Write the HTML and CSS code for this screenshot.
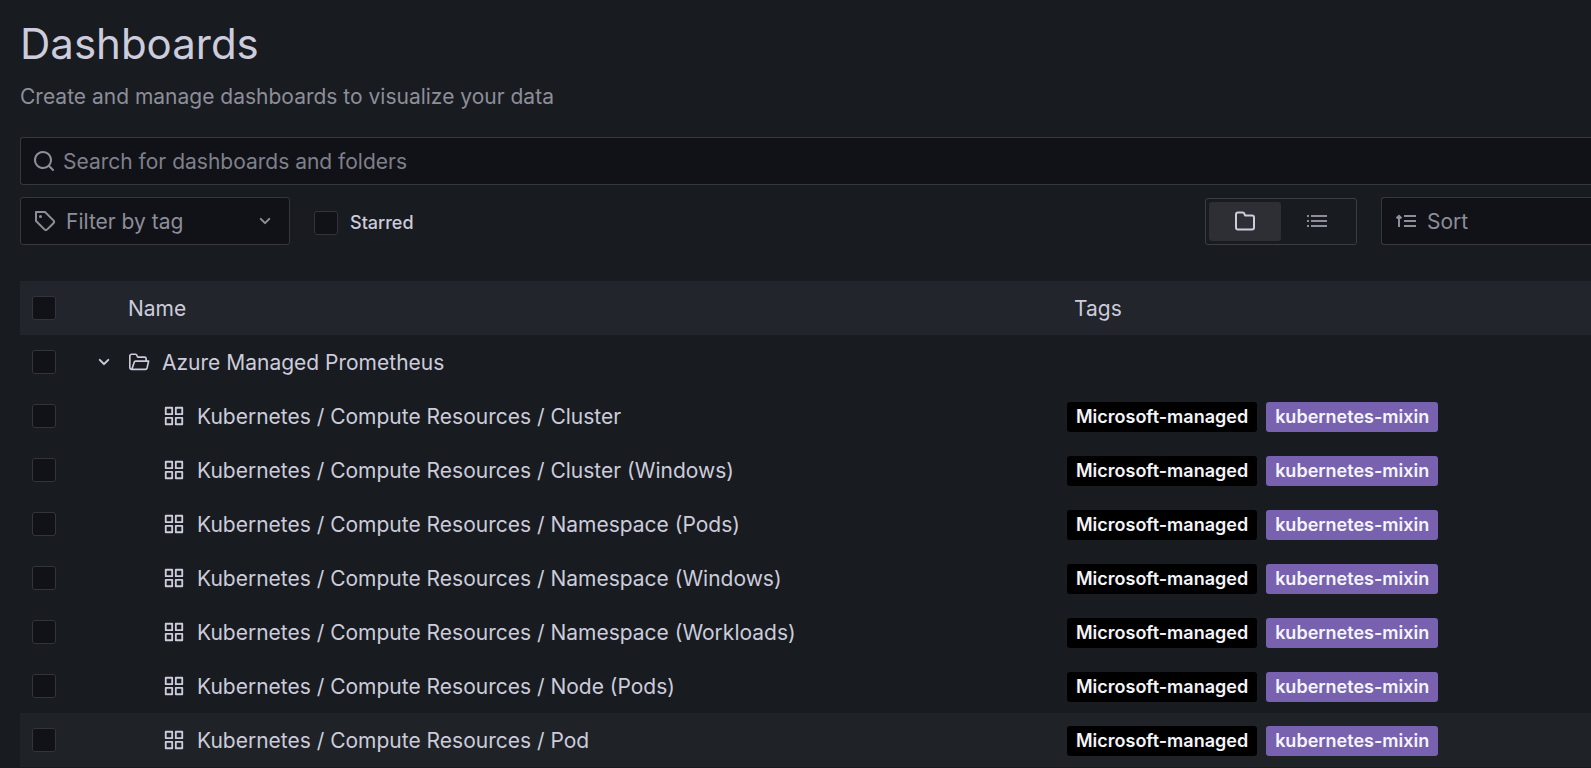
FILE: index.html
```html
<!DOCTYPE html>
<html lang="en">
<head>
<meta charset="utf-8">
<title>Dashboards</title>
<link rel="stylesheet" href="styles.css">
</head>
<body>
<svg class="sprite" aria-hidden="true">
  <symbol id="i-search" viewBox="0 0 24 24"><path d="M21.71,20.29,18,16.61A9,9,0,1,0,16.61,18l3.68,3.68a1,1,0,0,0,1.42,0A1,1,0,0,0,21.71,20.29ZM11,18a7,7,0,1,1,7-7A7,7,0,0,1,11,18Z"/></symbol>
  <symbol id="i-tag" viewBox="0 0 24 24"><path d="M7.5,6A1.5,1.5,0,1,0,9,7.5,1.5,1.5,0,0,0,7.5,6Zm13.62,4.71L12.71,2.29A1,1,0,0,0,12,2H3A1,1,0,0,0,2,3v9a1,1,0,0,0,.29.71l8.42,8.41a3,3,0,0,0,4.24,0L21.12,15a3,3,0,0,0,0-4.24Zm-1.41,2.82h0l-6.18,6.17a1,1,0,0,1-1.41,0L4,11.59V4h7.59l8.12,8.12a1,1,0,0,1,.29.71A1,1,0,0,1,19.71,13.53Z"/></symbol>
  <symbol id="i-down" viewBox="0 0 24 24"><path d="M17,9.17a1,1,0,0,0-1.41,0L12,12.71,8.46,9.17a1,1,0,0,0-1.41,0,1,1,0,0,0,0,1.42l4.24,4.24a1,1,0,0,0,1.42,0L17,10.59A1,1,0,0,0,17,9.17Z"/></symbol>
  <symbol id="i-folder" viewBox="0 0 24 24"><path d="M19,5.5H12.72l-.32-1a3,3,0,0,0-2.84-2H5a3,3,0,0,0-3,3v13a3,3,0,0,0,3,3H19a3,3,0,0,0,3-3V8.5A3,3,0,0,0,19,5.5Zm1,13a1,1,0,0,1-1,1H5a1,1,0,0,1-1-1V5.5a1,1,0,0,1,1-1H9.56a1,1,0,0,1,.95.68l.54,1.64A1,1,0,0,0,12,7.5h7a1,1,0,0,1,1,1Z"/></symbol>
  <symbol id="i-folder-open" viewBox="0 0 24 24"><path d="M5.3 20H4a2 2 0 0 1-2-2V5.5a2 2 0 0 1 2-2h4.2a1.6 1.6 0 0 1 1.5 1.1l.5 1.4a1 1 0 0 0 1 .7H18a1.800 1.800 0 0 1 1.800 1.800V11M4.200 20l2.700-8a1.500 1.500 0 0 1 1.400-1H22.500L20.800 18.500A2 2 0 0 1 18.800 20H4.200Z" fill="none" stroke="currentColor" stroke-width="1.800" stroke-linejoin="round"/></symbol>
  <symbol id="i-list" viewBox="0 0 24 24"><path d="M2 7h2M2 12h2M2 17h2M6 7h16M6 12h16M6 17h16" fill="none" stroke="currentColor" stroke-width="2"/></symbol>
  <symbol id="i-sort" viewBox="0 0 24 24"><path d="M5 18V7M2.500 9.200 5 6.800l2.500 2.400M10 7h12M10 12h12M10 17h12" fill="none" stroke="currentColor" stroke-width="2"/></symbol>
  <symbol id="i-apps" viewBox="0 0 24 24"><path d="M10,13H3a1,1,0,0,0-1,1v7a1,1,0,0,0,1,1h7a1,1,0,0,0,1-1V14A1,1,0,0,0,10,13ZM9,20H4V15H9ZM21,2H14a1,1,0,0,0-1,1v7a1,1,0,0,0,1,1h7a1,1,0,0,0,1-1V3A1,1,0,0,0,21,2ZM20,9H15V4h5Zm1,4H14a1,1,0,0,0-1,1v7a1,1,0,0,0,1,1h7a1,1,0,0,0,1-1V14A1,1,0,0,0,21,13Zm-1,7H15V15h5ZM10,2H3A1,1,0,0,0,2,3v7a1,1,0,0,0,1,1h7a1,1,0,0,0,1-1V3A1,1,0,0,0,10,2ZM9,9H4V4H9Z"/></symbol>
</svg>
<main class="page">
  <h1 class="title">Dashboards</h1>
  <p class="subtitle">Create and manage dashboards to visualize your data</p>

  <div class="field search">
    <svg class="icon"><use href="#i-search"/></svg>
    <input class="control" type="text" placeholder="Search for dashboards and folders" aria-label="Search for dashboards and folders">
  </div>

  <div class="toolbar">
    <div class="field filter">
      <svg class="icon"><use href="#i-tag"/></svg>
      <select class="control" aria-label="Filter by tag"><option>Filter by tag</option></select>
      <svg class="icon"><use href="#i-down"/></svg>
    </div>
    <label class="starred"><input class="check" type="checkbox">Starred</label>
    <div class="toggle" role="group" aria-label="View">
      <button class="view active" type="button" aria-label="Folders" aria-pressed="true"><svg class="icon"><use href="#i-folder"/></svg></button>
      <button class="view" type="button" aria-label="List" aria-pressed="false"><svg class="icon"><use href="#i-list"/></svg></button>
    </div>
    <div class="field sort">
      <svg class="icon"><use href="#i-sort"/></svg>
      <select class="control" aria-label="Sort"><option>Sort</option></select>
    </div>
  </div>

  <table class="table">
    <colgroup><col class="col-check"><col><col class="col-tags"></colgroup>
    <thead>
      <tr><th class="pick"><input class="check" type="checkbox" aria-label="Select all"></th><th class="head-name">Name</th><th class="head-tags">Tags</th></tr>
    </thead>
    <tbody>
      <tr><td class="pick"><input class="check" type="checkbox" aria-label="Select Azure Managed Prometheus"></td><td><div class="name"><button class="expand" type="button" aria-label="Collapse folder"><svg class="icon"><use href="#i-down"/></svg></button><svg class="icon small"><use href="#i-folder-open"/></svg><a class="link" href="#">Azure Managed Prometheus</a></div></td><td></td></tr>
      <tr><td class="pick"><input class="check" type="checkbox" aria-label="Select Cluster"></td><td><div class="name child"><svg class="icon small"><use href="#i-apps"/></svg><a class="link" href="#">Kubernetes / Compute Resources / Cluster</a></div></td><td><div class="tags"><span class="tag">Microsoft-managed</span><span class="tag purple">kubernetes-mixin</span></div></td></tr>
      <tr><td class="pick"><input class="check" type="checkbox" aria-label="Select Cluster (Windows)"></td><td><div class="name child"><svg class="icon small"><use href="#i-apps"/></svg><a class="link" href="#">Kubernetes / Compute Resources / Cluster (Windows)</a></div></td><td><div class="tags"><span class="tag">Microsoft-managed</span><span class="tag purple">kubernetes-mixin</span></div></td></tr>
      <tr><td class="pick"><input class="check" type="checkbox" aria-label="Select Namespace (Pods)"></td><td><div class="name child"><svg class="icon small"><use href="#i-apps"/></svg><a class="link" href="#">Kubernetes / Compute Resources / Namespace (Pods)</a></div></td><td><div class="tags"><span class="tag">Microsoft-managed</span><span class="tag purple">kubernetes-mixin</span></div></td></tr>
      <tr><td class="pick"><input class="check" type="checkbox" aria-label="Select Namespace (Windows)"></td><td><div class="name child"><svg class="icon small"><use href="#i-apps"/></svg><a class="link" href="#">Kubernetes / Compute Resources / Namespace (Windows)</a></div></td><td><div class="tags"><span class="tag">Microsoft-managed</span><span class="tag purple">kubernetes-mixin</span></div></td></tr>
      <tr><td class="pick"><input class="check" type="checkbox" aria-label="Select Namespace (Workloads)"></td><td><div class="name child"><svg class="icon small"><use href="#i-apps"/></svg><a class="link" href="#">Kubernetes / Compute Resources / Namespace (Workloads)</a></div></td><td><div class="tags"><span class="tag">Microsoft-managed</span><span class="tag purple">kubernetes-mixin</span></div></td></tr>
      <tr><td class="pick"><input class="check" type="checkbox" aria-label="Select Node (Pods)"></td><td><div class="name child"><svg class="icon small"><use href="#i-apps"/></svg><a class="link" href="#">Kubernetes / Compute Resources / Node (Pods)</a></div></td><td><div class="tags"><span class="tag">Microsoft-managed</span><span class="tag purple">kubernetes-mixin</span></div></td></tr>
      <tr class="highlight"><td class="pick"><input class="check" type="checkbox" aria-label="Select Pod"></td><td><div class="name child"><svg class="icon small"><use href="#i-apps"/></svg><a class="link" href="#">Kubernetes / Compute Resources / Pod</a></div></td><td><div class="tags"><span class="tag">Microsoft-managed</span><span class="tag purple">kubernetes-mixin</span></div></td></tr>
    </tbody>
  </table>
</main>
</body>
</html>
```

FILE: styles.css
```css
* { box-sizing: border-box; }

body {
  margin: 0;
  background: #181b1f;
  color: #ccccdc;
  font: 400 21px/32px Inter, "Liberation Sans", sans-serif;
}

.sprite { display: none; }

.page { padding: 20px 0 0 20px; }

.title {
  margin: 0;
  font-size: 42px;
  font-weight: 400;
  line-height: 48px;
}

.subtitle {
  margin: 13px 0 24px;
  color: #8d8e9a;
}

.icon {
  display: block;
  flex: none;
  width: 24px;
  height: 24px;
  fill: currentColor;
}

.icon.small { width: 22px; height: 22px; }

.field {
  display: flex;
  align-items: center;
  height: 48px;
  padding: 0 12px;
  background: #111217;
  border: 1px solid #36373d;
  border-radius: 3px;
  color: #8d8e9a;
}

.control {
  flex: 1;
  min-width: 0;
  height: 100%;
  padding: 0;
  border: 0;
  outline: 0;
  appearance: none;
  background: transparent;
  color: inherit;
  font: inherit;
}

select.control { padding-top: 2px; }

.control::placeholder { color: #7f808b; opacity: 1; }

.search {
  gap: 7px;
  padding-left: 11px;
  border-right: 0;
  border-radius: 3px 0 0 3px;
}

.toolbar {
  display: flex;
  align-items: center;
  margin: 12px 0 36px;
}

.filter { width: 270px; gap: 9px; }

.sort {
  width: 210px;
  gap: 9px;
  border-right: 0;
  border-radius: 3px 0 0 3px;
}

.starred {
  display: flex;
  align-items: center;
  gap: 12px;
  margin: 4px auto 0 24px;
  font-size: 18px;
  font-weight: 500;
  line-height: 24px;
}

.check {
  display: block;
  width: 24px;
  height: 24px;
  margin: 0;
  appearance: none;
  background: #111217;
  border: 1px solid #333439;
  border-radius: 3px;
}

.check:checked { background: #3d71d9; }

.toggle {
  display: flex;
  width: 152px;
  height: 47px;
  margin-right: 24px;
  padding: 3px;
  border: 1px solid #3c3d43;
  border-radius: 3px;
}

.view {
  display: flex;
  flex: 1;
  align-items: center;
  justify-content: center;
  padding: 0;
  border: 0;
  border-radius: 3px;
  background: transparent;
  color: #8d8e9a;
}

.view.active { background: #2d2f34; color: #ccccdc; }

.table {
  width: 100%;
  table-layout: fixed;
  border-collapse: collapse;
}

.col-check { width: 64px; }
.col-tags { width: 524px; }

.table th,
.table td {
  height: 54px;
  padding: 0;
  font-weight: 400;
  text-align: left;
  vertical-align: middle;
}

.table thead { background: #22252b; }
.table .highlight { background: #1f2226; }
.table .pick { padding-left: 12px; }
.table .head-name { padding: 2px 0 0 44px; }
.table .head-tags { padding: 2px 0 0 7px; }

.name {
  display: flex;
  align-items: center;
  gap: 12px;
  padding-left: 8px;
}

.name.child { padding-left: 79px; }

.expand {
  padding: 0;
  border: 0;
  background: transparent;
  color: inherit;
}

.link { padding-top: 2px; color: inherit; text-decoration: none; }

.tags { display: flex; gap: 9px; padding-top: 2px; }

.tag {
  padding: 0 9px;
  border-radius: 3px;
  background: #000;
  color: #f4f5f9;
  font-size: 18px;
  font-weight: 600;
  line-height: 30px;
}

.tag.purple { background: #7862b0; }
```
